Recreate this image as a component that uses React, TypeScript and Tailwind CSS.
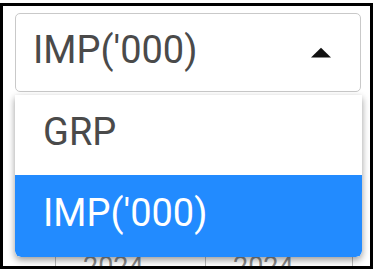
import React from "react";

export default function App() {
  return (
    <div className="w-[376px] h-[272px] bg-white overflow-hidden pt-[3px]" style={{ fontFamily: "Roboto, 'Liberation Sans', sans-serif" }}>
      <div className="relative w-[373px] h-[266px] border-[3px] border-black overflow-hidden bg-white flex flex-col px-[12px] pt-[7px]">
        <div className="w-[346px] h-[79px] shrink-0 rounded-[5px] border-[1.5px] border-[#c9c9c9] flex items-center justify-between pl-[17px] pr-[28px] pb-[5px]">
          <span className="text-[38px] leading-none text-[#4a4a4a]">IMP('000)</span>
          <svg width="22" height="11" viewBox="0 0 22 11" className="mt-[5px]">
            <path d="M1 10.5 L11 0.8 L21 10.5 Z" fill="#111" />
          </svg>
        </div>
        <div className="mt-auto ml-[40px] h-[14px] flex text-[27px] leading-none text-[#8a8a8a] translate-y-[2px]">
          <div className="w-[150px] border-l border-[#bbb] pl-[27px]">2024</div>
          <div className="w-[148px] border-l border-[#bbb] pl-[27px] border-r">2024</div>
        </div>
        <div className="absolute left-[12px] top-[89px] w-[347px] h-[162px] bg-white rounded-b-[6px] shadow-[0_3px_7px_rgba(0,0,0,0.4)] flex flex-col overflow-hidden">
          <div className="h-[80px] flex items-center pl-[28px] pb-[6px] text-[38px] leading-none text-[#4a4a4a]">GRP</div>
          <div className="h-[82px] flex items-center pl-[28px] pb-[6px] text-[38px] leading-none text-white bg-[#228bff] rounded-b-[6px]">IMP('000)</div>
        </div>
      </div>
    </div>
  );
}
